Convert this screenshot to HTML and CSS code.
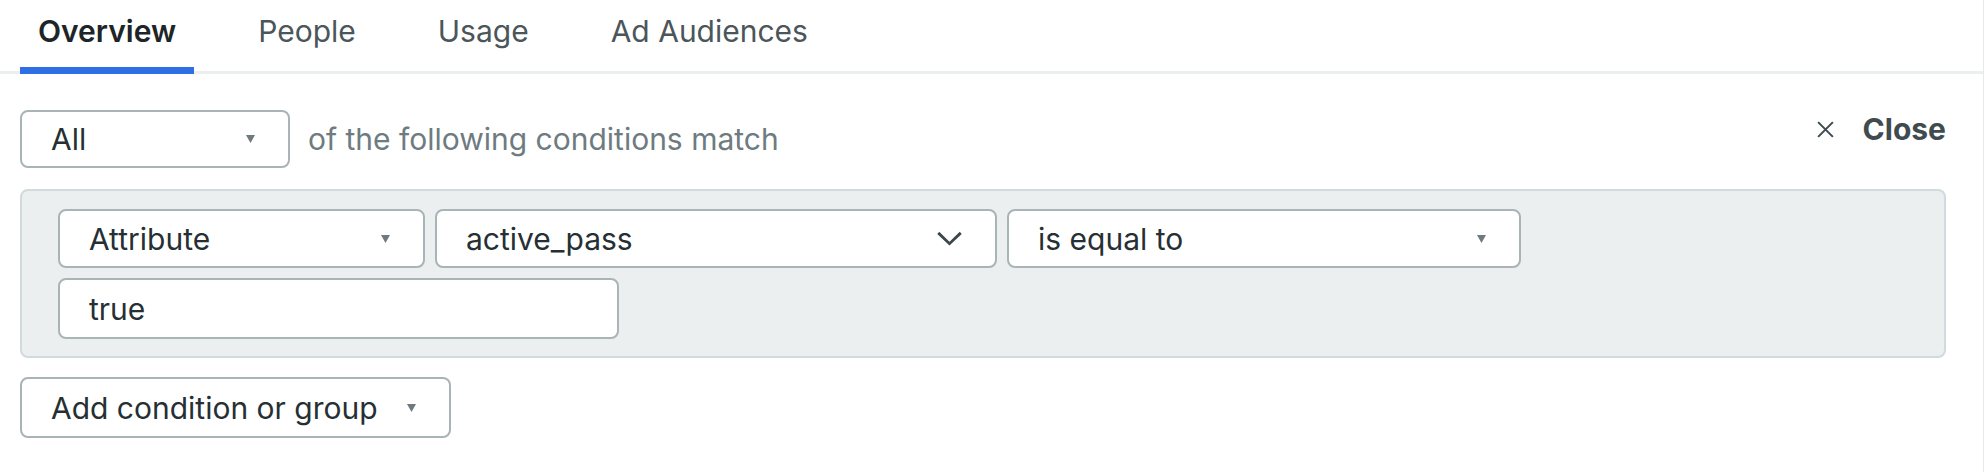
FILE: index.html
```html
<!DOCTYPE html>
<html>
<head>
<meta charset="utf-8">
<link rel="stylesheet" href="styles.css">
</head>
<body>
<div class="page">
  <nav class="tabs">
    <div class="tab active">Overview</div>
    <div class="tab">People</div>
    <div class="tab">Usage</div>
    <div class="tab">Ad Audiences</div>
  </nav>
  <div class="content">
    <div class="head-row">
      <div class="match">
        <div class="select sel-all"><span>All</span><svg class="tri" viewBox="0 0 8 7"><polygon points="0,0 8,0 4,7"/></svg></div>
        <span class="match-text">of the following conditions match</span>
      </div>
      <div class="close">
        <svg class="x" viewBox="0 0 18 18"><path d="M2 2 L16 16 M16 2 L2 16"/></svg>
        <span>Close</span>
      </div>
    </div>
    <div class="group">
      <div class="row">
        <div class="select sel-attr"><span>Attribute</span><svg class="tri" viewBox="0 0 8 7"><polygon points="0,0 8,0 4,7"/></svg></div>
        <div class="select sel-name"><span>active_pass</span><svg class="chev" viewBox="0 0 28 16"><path d="M2 2 L14 13.5 L26 2"/></svg></div>
        <div class="select sel-op"><span>is equal to</span><svg class="tri" viewBox="0 0 8 7"><polygon points="0,0 8,0 4,7"/></svg></div>
      </div>
      <div class="row">
        <div class="input sel-val"><span>true</span></div>
      </div>
    </div>
    <div class="select sel-add"><span>Add condition or group</span><svg class="tri" viewBox="0 0 8 7"><polygon points="0,0 8,0 4,7"/></svg></div>
  </div>
</div>
</body>
</html>
```

FILE: styles.css
```css
html, body {
  margin: 0;
  padding: 0;
  background: #ffffff;
}
body {
  font-family: Inter, "Noto Sans", "Liberation Sans", sans-serif;
  font-size: 30px;
  color: #263034;
}
.page {
  width: 1984px;
  height: 472px;
  box-sizing: border-box;
  border-right: 1px solid #e4e9ea;
}
.tabs {
  display: flex;
  gap: 46px;
  padding-left: 20px;
  height: 74px;
  box-sizing: border-box;
  border-bottom: 3px solid #eceff0;
}
.tab {
  padding: 0 18px;
  height: 74px;
  box-sizing: border-box;
  padding-top: 11px;
  line-height: 40px;
  color: #4b565b;
  border-bottom: 7px solid transparent;
  margin-bottom: -3px;
}
.tab.active {
  color: #1d2529;
  font-weight: 600;
  border-bottom-color: #2e6fe6;
}
.content {
  padding: 36px 37px 0 20px;
}
.head-row {
  display: flex;
  justify-content: space-between;
  align-items: center;
}
.match {
  display: flex;
  align-items: center;
  gap: 18px;
}
.match-text {
  color: #6e7b80;
}
.close {
  display: flex;
  align-items: center;
  gap: 28px;
  color: #404b50;
  font-weight: 700;
  margin-top: -20px;
}
.x {
  width: 19px;
  height: 19px;
  fill: none;
  stroke: #3f4a4f;
  stroke-width: 1.9;
}
.select, .input {
  display: flex;
  align-items: center;
  justify-content: space-between;
  box-sizing: border-box;
  height: 59px;
  padding: 0 33px 0 29px;
  background: #ffffff;
  border: 2px solid #a9b4b7;
  border-radius: 8px;
  color: #263034;
}
.tri {
  width: 9px;
  height: 8px;
  fill: #6f7a7e;
  flex: none;
}
.chev {
  width: 27px;
  height: 15px;
  fill: none;
  stroke: #3c464b;
  stroke-width: 3;
  flex: none;
}
.sel-all {
  width: 270px;
  height: 58px;
}
.group {
  margin-top: 21px;
  background: #ebeff0;
  border: 2px solid #d1dadc;
  border-radius: 8px;
  padding: 18px 36px 17px 36px;
  display: flex;
  flex-direction: column;
  gap: 10px;
}
.row {
  display: flex;
  gap: 10px;
}
.sel-attr { width: 367px; }
.sel-name { width: 562px; padding-right: 32px; }
.sel-op { width: 514px; }
.sel-val { width: 561px; height: 61px; }
.sel-add {
  display: inline-flex;
  margin-top: 19px;
  height: 61px;
  gap: 29px;
}
```
